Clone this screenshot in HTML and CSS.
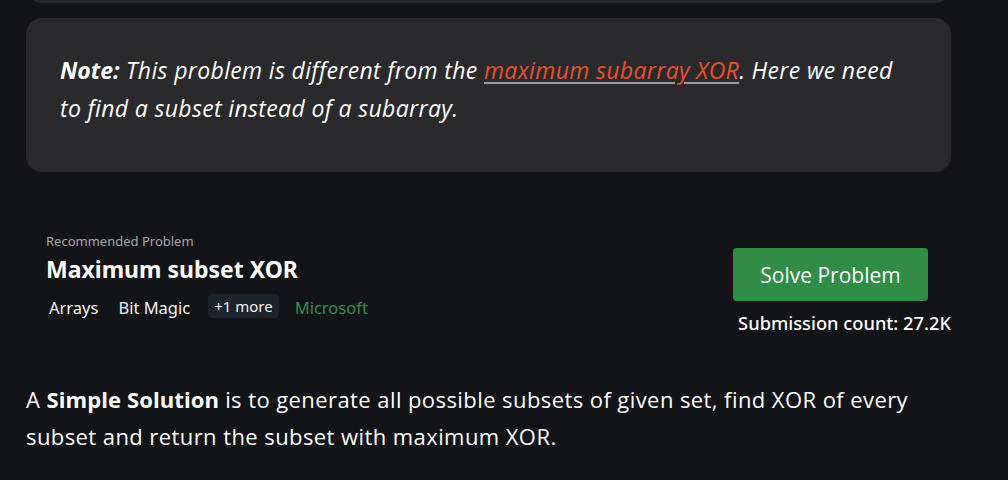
FILE: index.html
```html
<!DOCTYPE html>
<html>
<head>
<meta charset="utf-8">
<link rel="stylesheet" href="styles.css">
</head>
<body>
<div class="page">
  <div class="top-card"></div>
  <div class="note">
    <p><em><strong>Note:</strong> This problem is different from the <a href="#">maximum subarray XOR</a>. Here we need to find a subset instead of a subarray.</em></p>
  </div>
  <div class="rec">
    <div class="rec-left">
      <div class="rec-label">Recommended Problem</div>
      <div class="rec-title">Maximum subset XOR</div>
      <div class="tags">
        <span class="tag">Arrays</span>
        <span class="tag">Bit Magic</span>
        <span class="tag chip">+1 more</span>
        <span class="tag company">Microsoft</span>
      </div>
    </div>
    <div class="rec-right">
      <button class="solve">Solve Problem</button>
      <div class="count">Submission count: 27.2K</div>
    </div>
  </div>
  <p class="body-text">A <strong>Simple Solution</strong> is to generate all possible subsets of given set, find XOR of every subset and return the subset with maximum XOR.</p>
</div>
</body>
</html>
```

FILE: styles.css
```css
html, body {
  margin: 0;
  padding: 0;
  background: #131417;
}
body {
  width: 1008px;
  height: 480px;
  overflow: hidden;
  color: #ffffff;
  font-family: "Open Sans", "Noto Sans", sans-serif;
}
.page {
  padding: 0 57px 0 26px;
}
.top-card {
  height: 3px;
  margin-top: -20px;
  padding-top: 20px;
  background: #2a2a2d;
  border-radius: 0 0 16px 16px;
  width: 925px;
  box-sizing: content-box;
}
.note {
  margin-top: 15px;
  width: 925px;
  height: 154px;
  box-sizing: border-box;
  background: #2a2a2d;
  border-radius: 16px;
  padding: 33px 40px 34px 34px;
}
.note p {
  margin: 0;
  font-size: 23px;
  letter-spacing: 0.35px;
  line-height: 38px;
  color: #ffffff;
}
.note strong {
  font-weight: 700;
  letter-spacing: 0;
}
.note a {
  color: #e8512a;
  text-decoration: underline;
  text-decoration-color: #9a9a9a;
  text-underline-offset: 3px;
}
.rec {
  display: flex;
  justify-content: space-between;
  width: 925px;
  margin-top: 60px;
}
.rec-left {
  padding-left: 20px;
}
.rec-label {
  font-family: "Noto Sans", sans-serif;
  font-size: 13px;
  color: #a6a6a6;
  line-height: 18px;
}
.rec-title {
  font-family: "Noto Sans", sans-serif;
  font-weight: 700;
  font-size: 23px;
  line-height: 30px;
  margin-top: 4px;
}
.tags {
  display: flex;
  align-items: center;
  gap: 14px;
  margin-top: 12px;
}
.tag {
  font-family: "Noto Sans", sans-serif;
  font-size: 16.5px;
  line-height: 24px;
  padding: 0 3px;
  color: #f2f2f2;
}
.chip {
  background: #1b222a;
  border-radius: 4px;
  padding: 0 6px;
  font-size: 15px;
  line-height: 24px;
  margin-top: -4px;
  margin-left: 1px;
}
.company {
  color: #2e8d46;
  margin-left: -1px;
}
.rec-right {
  display: flex;
  flex-direction: column;
  align-items: flex-end;
  padding-top: 16px;
}
.solve {
  width: 195px;
  height: 53px;
  margin-right: 23px;
  border: none;
  border-radius: 4px;
  background: #2f8d46;
  color: #ffffff;
  font-family: "Open Sans", sans-serif;
  font-size: 21px;
  cursor: pointer;
}
.count {
  margin-top: 9px;
  font-family: "Noto Sans", sans-serif;
  font-size: 18.3px;
  font-weight: 500;
  line-height: 26px;
}
.body-text {
  margin: 45px 0 0;
  width: 925px;
  font-size: 22px;
  letter-spacing: 0.42px;
  line-height: 37px;
  color: #ffffff;
}
.body-text strong {
  font-weight: 700;
  letter-spacing: 0.1px;
}
```
